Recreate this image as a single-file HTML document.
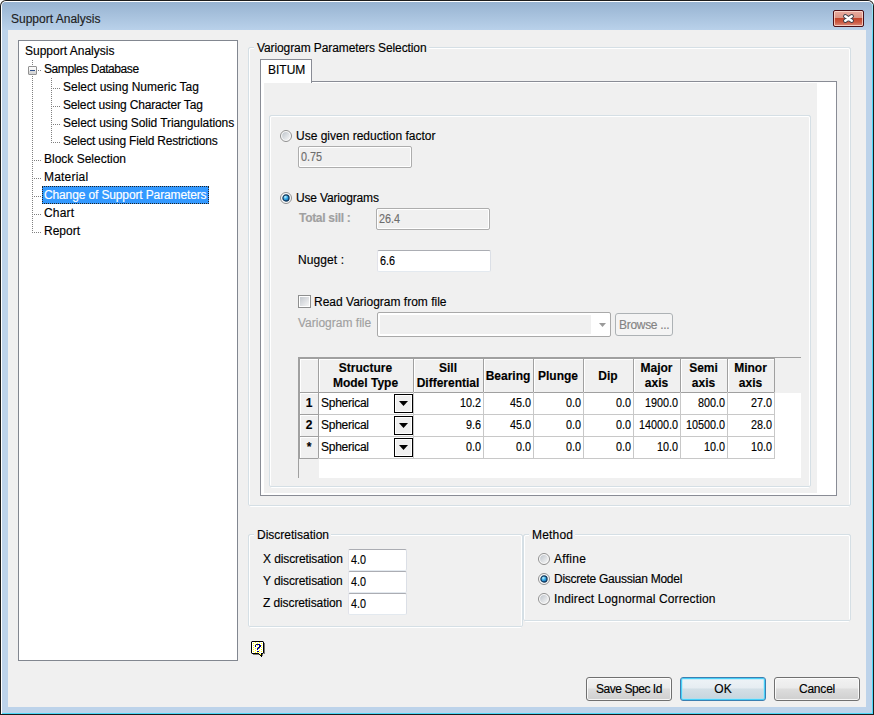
<!DOCTYPE html><html><head><meta charset="utf-8"><title>Support Analysis</title><style>
*{box-sizing:border-box;margin:0;padding:0}
html,body{width:874px;height:715px;overflow:hidden;background:#fff}
body{position:relative;font-family:"Liberation Sans",sans-serif;font-size:12px;color:#000}
.a{position:absolute}
.t{position:absolute;white-space:nowrap;line-height:14px;font-size:12px;-webkit-text-stroke-width:0.15px}
.b{font-weight:bold}
.gbb{position:absolute;border:1px solid #d5dfe5;border-radius:2px}
.gbw{position:absolute;border:1px solid #fff;border-radius:2px}
.tb{position:absolute;background:#fff;border:1px solid;border-color:#abadb3 #dbdfe6 #e3e9ef #e2e3ea;border-radius:2px}
.tbd{position:absolute;background:#f0f0f0;border:1px solid #adadad;border-radius:2px;box-shadow:inset 0 0 0 1px #fff}
.btn{position:absolute;border:1px solid #707070;border-radius:3px;background:linear-gradient(#f2f2f2 0,#ebebeb 45%,#dddddd 50%,#cfcfcf 100%);box-shadow:inset 0 0 0 1px rgba(255,255,255,.8)}
</style></head><body>
<svg width="0" height="0" style="position:absolute"><defs><linearGradient id="rg" x1="0" y1="0" x2="1" y2="1"><stop offset="0" stop-color="#bfc5cc"/><stop offset="1" stop-color="#f7f7f7"/></linearGradient><radialGradient id="rb" cx="0.38" cy="0.32" r="0.7"><stop offset="0" stop-color="#c8f4ff"/><stop offset="0.45" stop-color="#3fb2ec"/><stop offset="1" stop-color="#0c5fa6"/></radialGradient></defs></svg>
<div class="a" style="left:0;top:0;width:874px;height:715px;background:#1c1c1c;border-radius:6px 6px 0 0"></div>
<div class="a" style="left:1px;top:1px;width:872px;height:713px;background:#fff;border-radius:5px 5px 0 0"></div>
<div class="a" style="left:872px;top:4px;width:1px;height:710px;background:linear-gradient(#9fe6f6,#4cd8f8 40px)"></div>
<div class="a" style="left:2px;top:713px;width:871px;height:1px;background:#4cd8f8"></div>
<div class="a" style="left:2px;top:2px;width:870px;height:711px;background:#bdd3ea;border-radius:4px 4px 0 0"></div>
<div class="a" style="left:2px;top:2px;width:870px;height:28px;background:linear-gradient(#97b3d1,#b9d1ea);border-radius:4px 4px 0 0"></div>
<div class="t" style="left:11px;top:12px;color:#1e1e1e">Support Analysis</div>
<div class="a" style="left:833px;top:10px;width:31px;height:17px;border:1px solid #4a0f16;border-radius:2px;background:linear-gradient(#e9ab9f 0,#dc9686 45%,#c2442b 50%,#cc5a43 75%,#dc8c7c 100%);box-shadow:inset 0 0 0 1px rgba(255,225,215,.75)"></div>
<svg class="a" style="left:842px;top:13px" width="13" height="11" viewBox="0 0 13 11"><path d="M3.3 3.2 L9.7 7.8 M9.7 3.2 L3.3 7.8" stroke="#3b3f4a" stroke-width="4.4" stroke-linecap="round"/><path d="M3.3 3.2 L9.7 7.8 M9.7 3.2 L3.3 7.8" stroke="#fff" stroke-width="2.5" stroke-linecap="round"/></svg>
<div class="a" style="left:8px;top:30px;width:858px;height:677px;background:#f0f0f0"></div>
<div class="a" style="left:18px;top:40px;width:220px;height:621px;border:1px solid #828790;background:#fff"></div>
<svg class="a" style="left:0;top:0" width="240" height="260"><rect x="32" y="60" width="1" height="1" fill="#808080"/><rect x="32" y="62" width="1" height="1" fill="#808080"/><rect x="32" y="64" width="1" height="1" fill="#808080"/><rect x="32" y="76" width="1" height="1" fill="#808080"/><rect x="32" y="78" width="1" height="1" fill="#808080"/><rect x="32" y="80" width="1" height="1" fill="#808080"/><rect x="32" y="82" width="1" height="1" fill="#808080"/><rect x="32" y="84" width="1" height="1" fill="#808080"/><rect x="32" y="86" width="1" height="1" fill="#808080"/><rect x="32" y="88" width="1" height="1" fill="#808080"/><rect x="32" y="90" width="1" height="1" fill="#808080"/><rect x="32" y="92" width="1" height="1" fill="#808080"/><rect x="32" y="94" width="1" height="1" fill="#808080"/><rect x="32" y="96" width="1" height="1" fill="#808080"/><rect x="32" y="98" width="1" height="1" fill="#808080"/><rect x="32" y="100" width="1" height="1" fill="#808080"/><rect x="32" y="102" width="1" height="1" fill="#808080"/><rect x="32" y="104" width="1" height="1" fill="#808080"/><rect x="32" y="106" width="1" height="1" fill="#808080"/><rect x="32" y="108" width="1" height="1" fill="#808080"/><rect x="32" y="110" width="1" height="1" fill="#808080"/><rect x="32" y="112" width="1" height="1" fill="#808080"/><rect x="32" y="114" width="1" height="1" fill="#808080"/><rect x="32" y="116" width="1" height="1" fill="#808080"/><rect x="32" y="118" width="1" height="1" fill="#808080"/><rect x="32" y="120" width="1" height="1" fill="#808080"/><rect x="32" y="122" width="1" height="1" fill="#808080"/><rect x="32" y="124" width="1" height="1" fill="#808080"/><rect x="32" y="126" width="1" height="1" fill="#808080"/><rect x="32" y="128" width="1" height="1" fill="#808080"/><rect x="32" y="130" width="1" height="1" fill="#808080"/><rect x="32" y="132" width="1" height="1" fill="#808080"/><rect x="32" y="134" width="1" height="1" fill="#808080"/><rect x="32" y="136" width="1" height="1" fill="#808080"/><rect x="32" y="138" width="1" height="1" fill="#808080"/><rect x="32" y="140" width="1" height="1" fill="#808080"/><rect x="32" y="142" width="1" height="1" fill="#808080"/><rect x="32" y="144" width="1" height="1" fill="#808080"/><rect x="32" y="146" width="1" height="1" fill="#808080"/><rect x="32" y="148" width="1" height="1" fill="#808080"/><rect x="32" y="150" width="1" height="1" fill="#808080"/><rect x="32" y="152" width="1" height="1" fill="#808080"/><rect x="32" y="154" width="1" height="1" fill="#808080"/><rect x="32" y="156" width="1" height="1" fill="#808080"/><rect x="32" y="158" width="1" height="1" fill="#808080"/><rect x="32" y="160" width="1" height="1" fill="#808080"/><rect x="32" y="162" width="1" height="1" fill="#808080"/><rect x="32" y="164" width="1" height="1" fill="#808080"/><rect x="32" y="166" width="1" height="1" fill="#808080"/><rect x="32" y="168" width="1" height="1" fill="#808080"/><rect x="32" y="170" width="1" height="1" fill="#808080"/><rect x="32" y="172" width="1" height="1" fill="#808080"/><rect x="32" y="174" width="1" height="1" fill="#808080"/><rect x="32" y="176" width="1" height="1" fill="#808080"/><rect x="32" y="178" width="1" height="1" fill="#808080"/><rect x="32" y="180" width="1" height="1" fill="#808080"/><rect x="32" y="182" width="1" height="1" fill="#808080"/><rect x="32" y="184" width="1" height="1" fill="#808080"/><rect x="32" y="186" width="1" height="1" fill="#808080"/><rect x="32" y="188" width="1" height="1" fill="#808080"/><rect x="32" y="190" width="1" height="1" fill="#808080"/><rect x="32" y="192" width="1" height="1" fill="#808080"/><rect x="32" y="194" width="1" height="1" fill="#808080"/><rect x="32" y="196" width="1" height="1" fill="#808080"/><rect x="32" y="198" width="1" height="1" fill="#808080"/><rect x="32" y="200" width="1" height="1" fill="#808080"/><rect x="32" y="202" width="1" height="1" fill="#808080"/><rect x="32" y="204" width="1" height="1" fill="#808080"/><rect x="32" y="206" width="1" height="1" fill="#808080"/><rect x="32" y="208" width="1" height="1" fill="#808080"/><rect x="32" y="210" width="1" height="1" fill="#808080"/><rect x="32" y="212" width="1" height="1" fill="#808080"/><rect x="32" y="214" width="1" height="1" fill="#808080"/><rect x="32" y="216" width="1" height="1" fill="#808080"/><rect x="32" y="218" width="1" height="1" fill="#808080"/><rect x="32" y="220" width="1" height="1" fill="#808080"/><rect x="32" y="222" width="1" height="1" fill="#808080"/><rect x="32" y="224" width="1" height="1" fill="#808080"/><rect x="32" y="226" width="1" height="1" fill="#808080"/><rect x="32" y="228" width="1" height="1" fill="#808080"/><rect x="32" y="230" width="1" height="1" fill="#808080"/><rect x="32" y="232" width="1" height="1" fill="#808080"/><rect x="51" y="78" width="1" height="1" fill="#808080"/><rect x="51" y="80" width="1" height="1" fill="#808080"/><rect x="51" y="82" width="1" height="1" fill="#808080"/><rect x="51" y="84" width="1" height="1" fill="#808080"/><rect x="51" y="86" width="1" height="1" fill="#808080"/><rect x="51" y="88" width="1" height="1" fill="#808080"/><rect x="51" y="90" width="1" height="1" fill="#808080"/><rect x="51" y="92" width="1" height="1" fill="#808080"/><rect x="51" y="94" width="1" height="1" fill="#808080"/><rect x="51" y="96" width="1" height="1" fill="#808080"/><rect x="51" y="98" width="1" height="1" fill="#808080"/><rect x="51" y="100" width="1" height="1" fill="#808080"/><rect x="51" y="102" width="1" height="1" fill="#808080"/><rect x="51" y="104" width="1" height="1" fill="#808080"/><rect x="51" y="106" width="1" height="1" fill="#808080"/><rect x="51" y="108" width="1" height="1" fill="#808080"/><rect x="51" y="110" width="1" height="1" fill="#808080"/><rect x="51" y="112" width="1" height="1" fill="#808080"/><rect x="51" y="114" width="1" height="1" fill="#808080"/><rect x="51" y="116" width="1" height="1" fill="#808080"/><rect x="51" y="118" width="1" height="1" fill="#808080"/><rect x="51" y="120" width="1" height="1" fill="#808080"/><rect x="51" y="122" width="1" height="1" fill="#808080"/><rect x="51" y="124" width="1" height="1" fill="#808080"/><rect x="51" y="126" width="1" height="1" fill="#808080"/><rect x="51" y="128" width="1" height="1" fill="#808080"/><rect x="51" y="130" width="1" height="1" fill="#808080"/><rect x="51" y="132" width="1" height="1" fill="#808080"/><rect x="51" y="134" width="1" height="1" fill="#808080"/><rect x="51" y="136" width="1" height="1" fill="#808080"/><rect x="51" y="138" width="1" height="1" fill="#808080"/><rect x="51" y="140" width="1" height="1" fill="#808080"/><rect x="51" y="142" width="1" height="1" fill="#808080"/><rect x="53" y="88" width="1" height="1" fill="#808080"/><rect x="55" y="88" width="1" height="1" fill="#808080"/><rect x="57" y="88" width="1" height="1" fill="#808080"/><rect x="59" y="88" width="1" height="1" fill="#808080"/><rect x="53" y="106" width="1" height="1" fill="#808080"/><rect x="55" y="106" width="1" height="1" fill="#808080"/><rect x="57" y="106" width="1" height="1" fill="#808080"/><rect x="59" y="106" width="1" height="1" fill="#808080"/><rect x="53" y="124" width="1" height="1" fill="#808080"/><rect x="55" y="124" width="1" height="1" fill="#808080"/><rect x="57" y="124" width="1" height="1" fill="#808080"/><rect x="59" y="124" width="1" height="1" fill="#808080"/><rect x="53" y="142" width="1" height="1" fill="#808080"/><rect x="55" y="142" width="1" height="1" fill="#808080"/><rect x="57" y="142" width="1" height="1" fill="#808080"/><rect x="59" y="142" width="1" height="1" fill="#808080"/><rect x="34" y="160" width="1" height="1" fill="#808080"/><rect x="36" y="160" width="1" height="1" fill="#808080"/><rect x="38" y="160" width="1" height="1" fill="#808080"/><rect x="40" y="160" width="1" height="1" fill="#808080"/><rect x="34" y="178" width="1" height="1" fill="#808080"/><rect x="36" y="178" width="1" height="1" fill="#808080"/><rect x="38" y="178" width="1" height="1" fill="#808080"/><rect x="40" y="178" width="1" height="1" fill="#808080"/><rect x="34" y="196" width="1" height="1" fill="#808080"/><rect x="36" y="196" width="1" height="1" fill="#808080"/><rect x="38" y="196" width="1" height="1" fill="#808080"/><rect x="40" y="196" width="1" height="1" fill="#808080"/><rect x="34" y="214" width="1" height="1" fill="#808080"/><rect x="36" y="214" width="1" height="1" fill="#808080"/><rect x="38" y="214" width="1" height="1" fill="#808080"/><rect x="40" y="214" width="1" height="1" fill="#808080"/><rect x="34" y="232" width="1" height="1" fill="#808080"/><rect x="36" y="232" width="1" height="1" fill="#808080"/><rect x="38" y="232" width="1" height="1" fill="#808080"/><rect x="40" y="232" width="1" height="1" fill="#808080"/><rect x="38" y="70" width="1" height="1" fill="#808080"/><rect x="40" y="70" width="1" height="1" fill="#808080"/></svg>
<div class="a" style="left:28px;top:66px;width:9px;height:9px;border:1px solid #919191;border-radius:1px;background:linear-gradient(#fdfdfd 0,#f1f1f1 50%,#dcdcdc 55%,#d4d4d4 100%)"></div>
<div class="a" style="left:30px;top:70px;width:5px;height:1px;background:#2f4f86"></div>
<div class="t" style="left:25px;top:44px">Support Analysis</div>
<div class="t" style="left:44px;top:62px;letter-spacing:-0.42px">Samples Database</div>
<div class="t" style="left:63px;top:80px">Select using Numeric Tag</div>
<div class="t" style="left:63px;top:98px;letter-spacing:-0.16px">Select using Character Tag</div>
<div class="t" style="left:63px;top:116px;letter-spacing:-0.07px">Select using Solid Triangulations</div>
<div class="t" style="left:63px;top:134px;letter-spacing:-0.2px">Select using Field Restrictions</div>
<div class="t" style="left:44px;top:152px">Block Selection</div>
<div class="t" style="left:44px;top:170px;letter-spacing:0.2px">Material</div>
<div class="a" style="left:42px;top:186px;width:167px;height:18px;background:#3399ff;outline:1px dotted #222;outline-offset:-1px"></div>
<div class="t" style="left:44px;top:188px;color:#fff;letter-spacing:-0.13px">Change of Support Parameters</div>
<div class="t" style="left:44px;top:206px;letter-spacing:0.2px">Chart</div>
<div class="t" style="left:44px;top:224px">Report</div>
<div class="gbw" style="left:249px;top:48px;width:601px;height:459px"></div>
<div class="gbb" style="left:248px;top:47px;width:603px;height:459px"></div>
<div class="t" style="left:254px;top:41px;letter-spacing:-0.1px;padding:0 2px 0 3px;background:#f0f0f0">Variogram Parameters Selection</div>
<div class="a" style="left:260px;top:81px;width:577px;height:415px;border:1px solid #898c95;background:#fff"></div>
<div class="a" style="left:264px;top:83px;width:553px;height:410px;background:#f0f0f0"></div>
<div class="a" style="left:260px;top:59px;width:52px;height:24px;border:1px solid #898c95;border-bottom:none;background:#fff"></div>
<div class="t" style="left:268px;top:63px">BITUM</div>
<div class="gbw" style="left:270px;top:116px;width:540px;height:372px"></div>
<div class="gbb" style="left:269px;top:115px;width:542px;height:372px"></div>
<svg class="a" style="left:280px;top:130px" width="12" height="12"><circle cx="6" cy="6" r="5.5" fill="#fbfbfb" stroke="#8f8f8f" stroke-width="1"/><circle cx="6" cy="6" r="3.9" fill="url(#rg)"/></svg>
<div class="t" style="left:296px;top:129px">Use given reduction factor</div>
<div class="tbd" style="left:298px;top:146px;width:114px;height:22px"></div>
<div class="t" style="left:301px;top:150px;color:#6d6d6d;transform:scaleX(0.9);transform-origin:0 0">0.75</div>
<svg class="a" style="left:280px;top:192px" width="12" height="12"><circle cx="6" cy="6" r="5.5" fill="#fbfbfb" stroke="#8f8f8f" stroke-width="1"/><circle cx="6" cy="6" r="3.1" fill="url(#rb)" stroke="#0f3558" stroke-width="1.2"/></svg>
<div class="t" style="left:296px;top:191px;letter-spacing:-0.17px">Use Variograms</div>
<div class="t b" style="left:299px;top:211px;color:#a0a0a0;letter-spacing:-0.3px">Total sill :</div>
<div class="tbd" style="left:376px;top:208px;width:114px;height:22px"></div>
<div class="t" style="left:379px;top:212px;color:#6d6d6d;transform:scaleX(0.9);transform-origin:0 0">26.4</div>
<div class="t" style="left:298px;top:253px;letter-spacing:0.1px">Nugget :</div>
<div class="tb" style="left:377px;top:250px;width:114px;height:22px"></div>
<div class="t" style="left:380px;top:254px;transform:scaleX(0.9);transform-origin:0 0">6.6</div>
<div class="a" style="left:298px;top:295px;width:13px;height:13px;border:1px solid #8e8f8f;background:#fff"><div class="a" style="left:1px;top:1px;width:9px;height:9px;background:linear-gradient(135deg,#c3c8ce,#f6f6f6)"></div></div>
<div class="t" style="left:314px;top:295px">Read Variogram from file</div>
<div class="t" style="left:298px;top:316px;color:#a0a0a0">Variogram file</div>
<div class="a" style="left:377px;top:312px;width:234px;height:25px;border:1px solid #a9a9a9;border-radius:2px;background:#fff"></div>
<div class="a" style="left:380px;top:315px;width:211px;height:19px;background:#f0f0f0"></div>
<svg class="a" style="left:599px;top:323px" width="7" height="4"><path d="M0 0H7L3.5 4Z" fill="#9a9a9a"/></svg>
<div class="a" style="left:615px;top:313px;width:58px;height:23px;border:1px solid #adb2b5;border-radius:3px;background:#f4f4f4"></div>
<div class="t" style="left:619px;top:318px;color:#838383;letter-spacing:-0.3px">Browse ...</div>
<div class="a" style="left:298px;top:357px;width:503px;height:121px;background:#fff;border-left:1px solid #a0a0a0;border-top:1px solid #a0a0a0"></div>
<div class="a" style="left:299px;top:358px;width:502px;height:35px;background:#f0f0f0"></div>
<div class="a" style="left:299px;top:358px;width:20px;height:120px;background:#f0f0f0"></div>
<div class="a" style="left:299px;top:358px;width:20px;height:35px;border:1px solid #a0a0a0"></div>
<div class="a" style="left:300px;top:359px;width:1px;height:33px;background:#fff"></div>
<div class="a" style="left:300px;top:359px;width:18px;height:1px;background:#fff"></div>
<div class="a" style="left:318px;top:358px;width:96px;height:35px;border:1px solid #a0a0a0"></div>
<div class="a" style="left:319px;top:359px;width:1px;height:33px;background:#fff"></div>
<div class="a" style="left:319px;top:359px;width:94px;height:1px;background:#fff"></div>
<div class="t b" style="left:318px;top:361px;width:95px;text-align:center">Structure</div>
<div class="t b" style="left:318px;top:376px;width:95px;text-align:center">Model Type</div>
<div class="a" style="left:413px;top:358px;width:71px;height:35px;border:1px solid #a0a0a0"></div>
<div class="a" style="left:414px;top:359px;width:1px;height:33px;background:#fff"></div>
<div class="a" style="left:414px;top:359px;width:69px;height:1px;background:#fff"></div>
<div class="t b" style="left:413px;top:361px;width:70px;text-align:center">Sill</div>
<div class="t b" style="left:413px;top:376px;width:70px;text-align:center">Differential</div>
<div class="a" style="left:483px;top:358px;width:51px;height:35px;border:1px solid #a0a0a0"></div>
<div class="a" style="left:484px;top:359px;width:1px;height:33px;background:#fff"></div>
<div class="a" style="left:484px;top:359px;width:49px;height:1px;background:#fff"></div>
<div class="t b" style="left:483px;top:369px;width:50px;text-align:center">Bearing</div>
<div class="a" style="left:533px;top:358px;width:51px;height:35px;border:1px solid #a0a0a0"></div>
<div class="a" style="left:534px;top:359px;width:1px;height:33px;background:#fff"></div>
<div class="a" style="left:534px;top:359px;width:49px;height:1px;background:#fff"></div>
<div class="t b" style="left:533px;top:369px;width:50px;text-align:center">Plunge</div>
<div class="a" style="left:583px;top:358px;width:51px;height:35px;border:1px solid #a0a0a0"></div>
<div class="a" style="left:584px;top:359px;width:1px;height:33px;background:#fff"></div>
<div class="a" style="left:584px;top:359px;width:49px;height:1px;background:#fff"></div>
<div class="t b" style="left:583px;top:369px;width:50px;text-align:center">Dip</div>
<div class="a" style="left:633px;top:358px;width:48px;height:35px;border:1px solid #a0a0a0"></div>
<div class="a" style="left:634px;top:359px;width:1px;height:33px;background:#fff"></div>
<div class="a" style="left:634px;top:359px;width:46px;height:1px;background:#fff"></div>
<div class="t b" style="left:633px;top:361px;width:47px;text-align:center">Major</div>
<div class="t b" style="left:633px;top:376px;width:47px;text-align:center">axis</div>
<div class="a" style="left:680px;top:358px;width:48px;height:35px;border:1px solid #a0a0a0"></div>
<div class="a" style="left:681px;top:359px;width:1px;height:33px;background:#fff"></div>
<div class="a" style="left:681px;top:359px;width:46px;height:1px;background:#fff"></div>
<div class="t b" style="left:680px;top:361px;width:47px;text-align:center">Semi</div>
<div class="t b" style="left:680px;top:376px;width:47px;text-align:center">axis</div>
<div class="a" style="left:727px;top:358px;width:48px;height:35px;border:1px solid #a0a0a0"></div>
<div class="a" style="left:728px;top:359px;width:1px;height:33px;background:#fff"></div>
<div class="a" style="left:728px;top:359px;width:46px;height:1px;background:#fff"></div>
<div class="t b" style="left:727px;top:361px;width:47px;text-align:center">Minor</div>
<div class="t b" style="left:727px;top:376px;width:47px;text-align:center">axis</div>
<div class="a" style="left:299px;top:392px;width:20px;height:23px;border:1px solid #a0a0a0;background:#f0f0f0"></div>
<div class="a" style="left:300px;top:393px;width:1px;height:21px;background:#fff"></div>
<div class="a" style="left:300px;top:393px;width:18px;height:1px;background:#fff"></div>
<div class="t b" style="left:299px;top:396px;width:20px;text-align:center">1</div>
<div class="a" style="left:318px;top:392px;width:96px;height:23px;border-right:1px solid #c8c8c8;border-bottom:1px solid #c8c8c8"></div>
<div class="a" style="left:413px;top:392px;width:71px;height:23px;border-right:1px solid #c8c8c8;border-bottom:1px solid #c8c8c8"></div>
<div class="a" style="left:483px;top:392px;width:51px;height:23px;border-right:1px solid #c8c8c8;border-bottom:1px solid #c8c8c8"></div>
<div class="a" style="left:533px;top:392px;width:51px;height:23px;border-right:1px solid #c8c8c8;border-bottom:1px solid #c8c8c8"></div>
<div class="a" style="left:583px;top:392px;width:51px;height:23px;border-right:1px solid #c8c8c8;border-bottom:1px solid #c8c8c8"></div>
<div class="a" style="left:633px;top:392px;width:48px;height:23px;border-right:1px solid #c8c8c8;border-bottom:1px solid #c8c8c8"></div>
<div class="a" style="left:680px;top:392px;width:48px;height:23px;border-right:1px solid #c8c8c8;border-bottom:1px solid #c8c8c8"></div>
<div class="a" style="left:727px;top:392px;width:48px;height:23px;border-right:1px solid #c8c8c8;border-bottom:1px solid #c8c8c8"></div>
<div class="t" style="left:321px;top:396px;letter-spacing:-0.25px">Spherical</div>
<div class="a" style="left:394px;top:394px;width:19px;height:19px;border:1px solid #000;background:#f0f0f0;box-shadow:inset 0 0 0 1px #fff"></div>
<svg class="a" style="left:399px;top:401px" width="9" height="5"><path d="M0 0H9L4.5 5Z" fill="#000"/></svg>
<div class="t" style="left:403px;top:396px;width:78px;text-align:right;transform:scaleX(0.9);transform-origin:78px 0">10.2</div>
<div class="t" style="left:453px;top:396px;width:78px;text-align:right;transform:scaleX(0.9);transform-origin:78px 0">45.0</div>
<div class="t" style="left:503px;top:396px;width:78px;text-align:right;transform:scaleX(0.9);transform-origin:78px 0">0.0</div>
<div class="t" style="left:553px;top:396px;width:78px;text-align:right;transform:scaleX(0.9);transform-origin:78px 0">0.0</div>
<div class="t" style="left:600px;top:396px;width:78px;text-align:right;transform:scaleX(0.9);transform-origin:78px 0">1900.0</div>
<div class="t" style="left:647px;top:396px;width:78px;text-align:right;transform:scaleX(0.9);transform-origin:78px 0">800.0</div>
<div class="t" style="left:694px;top:396px;width:78px;text-align:right;transform:scaleX(0.9);transform-origin:78px 0">27.0</div>
<div class="a" style="left:299px;top:414px;width:20px;height:23px;border:1px solid #a0a0a0;background:#f0f0f0"></div>
<div class="a" style="left:300px;top:415px;width:1px;height:21px;background:#fff"></div>
<div class="a" style="left:300px;top:415px;width:18px;height:1px;background:#fff"></div>
<div class="t b" style="left:299px;top:418px;width:20px;text-align:center">2</div>
<div class="a" style="left:318px;top:414px;width:96px;height:23px;border-right:1px solid #c8c8c8;border-bottom:1px solid #c8c8c8"></div>
<div class="a" style="left:413px;top:414px;width:71px;height:23px;border-right:1px solid #c8c8c8;border-bottom:1px solid #c8c8c8"></div>
<div class="a" style="left:483px;top:414px;width:51px;height:23px;border-right:1px solid #c8c8c8;border-bottom:1px solid #c8c8c8"></div>
<div class="a" style="left:533px;top:414px;width:51px;height:23px;border-right:1px solid #c8c8c8;border-bottom:1px solid #c8c8c8"></div>
<div class="a" style="left:583px;top:414px;width:51px;height:23px;border-right:1px solid #c8c8c8;border-bottom:1px solid #c8c8c8"></div>
<div class="a" style="left:633px;top:414px;width:48px;height:23px;border-right:1px solid #c8c8c8;border-bottom:1px solid #c8c8c8"></div>
<div class="a" style="left:680px;top:414px;width:48px;height:23px;border-right:1px solid #c8c8c8;border-bottom:1px solid #c8c8c8"></div>
<div class="a" style="left:727px;top:414px;width:48px;height:23px;border-right:1px solid #c8c8c8;border-bottom:1px solid #c8c8c8"></div>
<div class="t" style="left:321px;top:418px;letter-spacing:-0.25px">Spherical</div>
<div class="a" style="left:394px;top:416px;width:19px;height:19px;border:1px solid #000;background:#f0f0f0;box-shadow:inset 0 0 0 1px #fff"></div>
<svg class="a" style="left:399px;top:423px" width="9" height="5"><path d="M0 0H9L4.5 5Z" fill="#000"/></svg>
<div class="t" style="left:403px;top:418px;width:78px;text-align:right;transform:scaleX(0.9);transform-origin:78px 0">9.6</div>
<div class="t" style="left:453px;top:418px;width:78px;text-align:right;transform:scaleX(0.9);transform-origin:78px 0">45.0</div>
<div class="t" style="left:503px;top:418px;width:78px;text-align:right;transform:scaleX(0.9);transform-origin:78px 0">0.0</div>
<div class="t" style="left:553px;top:418px;width:78px;text-align:right;transform:scaleX(0.9);transform-origin:78px 0">0.0</div>
<div class="t" style="left:600px;top:418px;width:78px;text-align:right;transform:scaleX(0.9);transform-origin:78px 0">14000.0</div>
<div class="t" style="left:647px;top:418px;width:78px;text-align:right;transform:scaleX(0.9);transform-origin:78px 0">10500.0</div>
<div class="t" style="left:694px;top:418px;width:78px;text-align:right;transform:scaleX(0.9);transform-origin:78px 0">28.0</div>
<div class="a" style="left:299px;top:436px;width:20px;height:23px;border:1px solid #a0a0a0;background:#f0f0f0"></div>
<div class="a" style="left:300px;top:437px;width:1px;height:21px;background:#fff"></div>
<div class="a" style="left:300px;top:437px;width:18px;height:1px;background:#fff"></div>
<div class="t b" style="left:299px;top:440px;width:20px;text-align:center">*</div>
<div class="a" style="left:318px;top:436px;width:96px;height:23px;border-right:1px solid #c8c8c8;border-bottom:1px solid #c8c8c8"></div>
<div class="a" style="left:413px;top:436px;width:71px;height:23px;border-right:1px solid #c8c8c8;border-bottom:1px solid #c8c8c8"></div>
<div class="a" style="left:483px;top:436px;width:51px;height:23px;border-right:1px solid #c8c8c8;border-bottom:1px solid #c8c8c8"></div>
<div class="a" style="left:533px;top:436px;width:51px;height:23px;border-right:1px solid #c8c8c8;border-bottom:1px solid #c8c8c8"></div>
<div class="a" style="left:583px;top:436px;width:51px;height:23px;border-right:1px solid #c8c8c8;border-bottom:1px solid #c8c8c8"></div>
<div class="a" style="left:633px;top:436px;width:48px;height:23px;border-right:1px solid #c8c8c8;border-bottom:1px solid #c8c8c8"></div>
<div class="a" style="left:680px;top:436px;width:48px;height:23px;border-right:1px solid #c8c8c8;border-bottom:1px solid #c8c8c8"></div>
<div class="a" style="left:727px;top:436px;width:48px;height:23px;border-right:1px solid #c8c8c8;border-bottom:1px solid #c8c8c8"></div>
<div class="t" style="left:321px;top:440px;letter-spacing:-0.25px">Spherical</div>
<div class="a" style="left:394px;top:438px;width:19px;height:19px;border:1px solid #000;background:#f0f0f0;box-shadow:inset 0 0 0 1px #fff"></div>
<svg class="a" style="left:399px;top:445px" width="9" height="5"><path d="M0 0H9L4.5 5Z" fill="#000"/></svg>
<div class="t" style="left:403px;top:440px;width:78px;text-align:right;transform:scaleX(0.9);transform-origin:78px 0">0.0</div>
<div class="t" style="left:453px;top:440px;width:78px;text-align:right;transform:scaleX(0.9);transform-origin:78px 0">0.0</div>
<div class="t" style="left:503px;top:440px;width:78px;text-align:right;transform:scaleX(0.9);transform-origin:78px 0">0.0</div>
<div class="t" style="left:553px;top:440px;width:78px;text-align:right;transform:scaleX(0.9);transform-origin:78px 0">0.0</div>
<div class="t" style="left:600px;top:440px;width:78px;text-align:right;transform:scaleX(0.9);transform-origin:78px 0">10.0</div>
<div class="t" style="left:647px;top:440px;width:78px;text-align:right;transform:scaleX(0.9);transform-origin:78px 0">10.0</div>
<div class="t" style="left:694px;top:440px;width:78px;text-align:right;transform:scaleX(0.9);transform-origin:78px 0">10.0</div>
<div class="gbw" style="left:249px;top:535px;width:273px;height:93px"></div>
<div class="gbb" style="left:248px;top:534px;width:275px;height:93px"></div>
<div class="t" style="left:254px;top:528px;padding:0 2px 0 3px;background:#f0f0f0">Discretisation</div>
<div class="t" style="left:263px;top:552px;letter-spacing:-0.1px">X discretisation</div>
<div class="tb" style="left:348px;top:549px;width:59px;height:22px"></div>
<div class="t" style="left:351px;top:553px;transform:scaleX(0.9);transform-origin:0 0">4.0</div>
<div class="t" style="left:263px;top:574px;letter-spacing:-0.1px">Y discretisation</div>
<div class="tb" style="left:348px;top:571px;width:59px;height:22px"></div>
<div class="t" style="left:351px;top:575px;transform:scaleX(0.9);transform-origin:0 0">4.0</div>
<div class="t" style="left:263px;top:596px;letter-spacing:-0.1px">Z discretisation</div>
<div class="tb" style="left:348px;top:593px;width:59px;height:22px"></div>
<div class="t" style="left:351px;top:597px;transform:scaleX(0.9);transform-origin:0 0">4.0</div>
<div class="gbw" style="left:524px;top:535px;width:326px;height:87px"></div>
<div class="gbb" style="left:523px;top:534px;width:328px;height:87px"></div>
<div class="t" style="left:529px;top:528px;letter-spacing:0.2px;padding:0 2px 0 3px;background:#f0f0f0">Method</div>
<svg class="a" style="left:538px;top:553px" width="12" height="12"><circle cx="6" cy="6" r="5.5" fill="#fbfbfb" stroke="#8f8f8f" stroke-width="1"/><circle cx="6" cy="6" r="3.9" fill="url(#rg)"/></svg>
<div class="t" style="left:554px;top:552px;letter-spacing:0.28px">Affine</div>
<svg class="a" style="left:538px;top:573px" width="12" height="12"><circle cx="6" cy="6" r="5.5" fill="#fbfbfb" stroke="#8f8f8f" stroke-width="1"/><circle cx="6" cy="6" r="3.1" fill="url(#rb)" stroke="#0f3558" stroke-width="1.2"/></svg>
<div class="t" style="left:554px;top:572px;letter-spacing:-0.26px">Discrete Gaussian Model</div>
<svg class="a" style="left:538px;top:593px" width="12" height="12"><circle cx="6" cy="6" r="5.5" fill="#fbfbfb" stroke="#8f8f8f" stroke-width="1"/><circle cx="6" cy="6" r="3.9" fill="url(#rg)"/></svg>
<div class="t" style="left:554px;top:592px;letter-spacing:0.12px">Indirect Lognormal Correction</div>
<svg class="a" style="left:250px;top:640px" width="16" height="18" shape-rendering="crispEdges"><rect x="2" y="2" width="11" height="11" fill="#fff"/><rect x="9" y="13" width="2" height="1" fill="#fff"/><rect x="5" y="2" width="1" height="1" fill="#ffff00"/><rect x="9" y="2" width="1" height="1" fill="#ffff00"/><rect x="3" y="3" width="1" height="1" fill="#ffff00"/><rect x="7" y="3" width="1" height="1" fill="#ffff00"/><rect x="11" y="3" width="1" height="1" fill="#ffff00"/><rect x="5" y="4" width="1" height="1" fill="#ffff00"/><rect x="9" y="4" width="1" height="1" fill="#ffff00"/><rect x="3" y="5" width="1" height="1" fill="#ffff00"/><rect x="7" y="5" width="1" height="1" fill="#ffff00"/><rect x="11" y="5" width="1" height="1" fill="#ffff00"/><rect x="5" y="6" width="1" height="1" fill="#ffff00"/><rect x="9" y="6" width="1" height="1" fill="#ffff00"/><rect x="3" y="7" width="1" height="1" fill="#ffff00"/><rect x="7" y="7" width="1" height="1" fill="#ffff00"/><rect x="11" y="7" width="1" height="1" fill="#ffff00"/><rect x="5" y="8" width="1" height="1" fill="#ffff00"/><rect x="9" y="8" width="1" height="1" fill="#ffff00"/><rect x="3" y="9" width="1" height="1" fill="#ffff00"/><rect x="7" y="9" width="1" height="1" fill="#ffff00"/><rect x="11" y="9" width="1" height="1" fill="#ffff00"/><rect x="5" y="10" width="1" height="1" fill="#ffff00"/><rect x="9" y="10" width="1" height="1" fill="#ffff00"/><rect x="3" y="11" width="1" height="1" fill="#ffff00"/><rect x="7" y="11" width="1" height="1" fill="#ffff00"/><rect x="11" y="11" width="1" height="1" fill="#ffff00"/><rect x="5" y="12" width="1" height="1" fill="#ffff00"/><rect x="9" y="12" width="1" height="1" fill="#ffff00"/><rect x="7" y="12" width="1" height="1" fill="#ffff00"/><rect x="10" y="14" width="1" height="1" fill="#ffff00"/><rect x="6" y="4" width="4" height="1" fill="#00007f"/><rect x="5" y="5" width="1" height="2" fill="#00007f"/><rect x="9" y="5" width="2" height="2" fill="#00007f"/><rect x="8" y="7" width="2" height="1" fill="#00007f"/><rect x="7" y="8" width="2" height="1" fill="#00007f"/><rect x="7" y="9" width="1" height="1" fill="#00007f"/><rect x="7" y="11" width="2" height="1" fill="#00007f"/><rect x="8" y="8" width="1" height="1" fill="#0000ff"/><rect x="14" y="3" width="1" height="11" fill="#7a7a7a"/><rect x="3" y="14" width="6" height="1" fill="#7a7a7a"/><rect x="12" y="14" width="1" height="2" fill="#7a7a7a"/><rect x="2" y="1" width="11" height="1" fill="#000"/><rect x="1" y="2" width="1" height="11" fill="#000"/><rect x="13" y="2" width="1" height="11" fill="#000"/><rect x="2" y="13" width="7" height="1" fill="#000"/><rect x="11" y="13" width="2" height="1" fill="#000"/><rect x="9" y="14" width="1" height="1" fill="#000"/><rect x="11" y="14" width="1" height="1" fill="#000"/><rect x="10" y="15" width="2" height="1" fill="#000"/><rect x="11" y="16" width="1" height="1" fill="#000"/><rect x="1" y="1" width="1" height="1" fill="#9a9a9a"/><rect x="13" y="1" width="1" height="1" fill="#9a9a9a"/><rect x="1" y="13" width="1" height="1" fill="#9a9a9a"/><rect x="13" y="13" width="1" height="1" fill="#9a9a9a"/></svg>
<div class="btn" style="left:586px;top:677px;width:86px;height:24px"></div>
<div class="t" style="left:586px;top:682px;letter-spacing:-0.45px;width:86px;text-align:center">Save Spec Id</div>
<div class="a" style="left:680px;top:677px;width:86px;height:24px;border:1px solid #3c7fb1;border-radius:3px;background:linear-gradient(#eef3f7 0,#e6edf2 45%,#d3dfe6 50%,#c6d4dd 100%);box-shadow:inset 0 0 0 1px #48d0f8,inset 0 0 0 2px rgba(160,230,250,.5)"></div>
<div class="t" style="left:680px;top:682px;width:86px;text-align:center">OK</div>
<div class="btn" style="left:774px;top:677px;width:86px;height:24px"></div>
<div class="t" style="left:774px;top:682px;letter-spacing:-0.2px;width:86px;text-align:center">Cancel</div>
</body></html>
